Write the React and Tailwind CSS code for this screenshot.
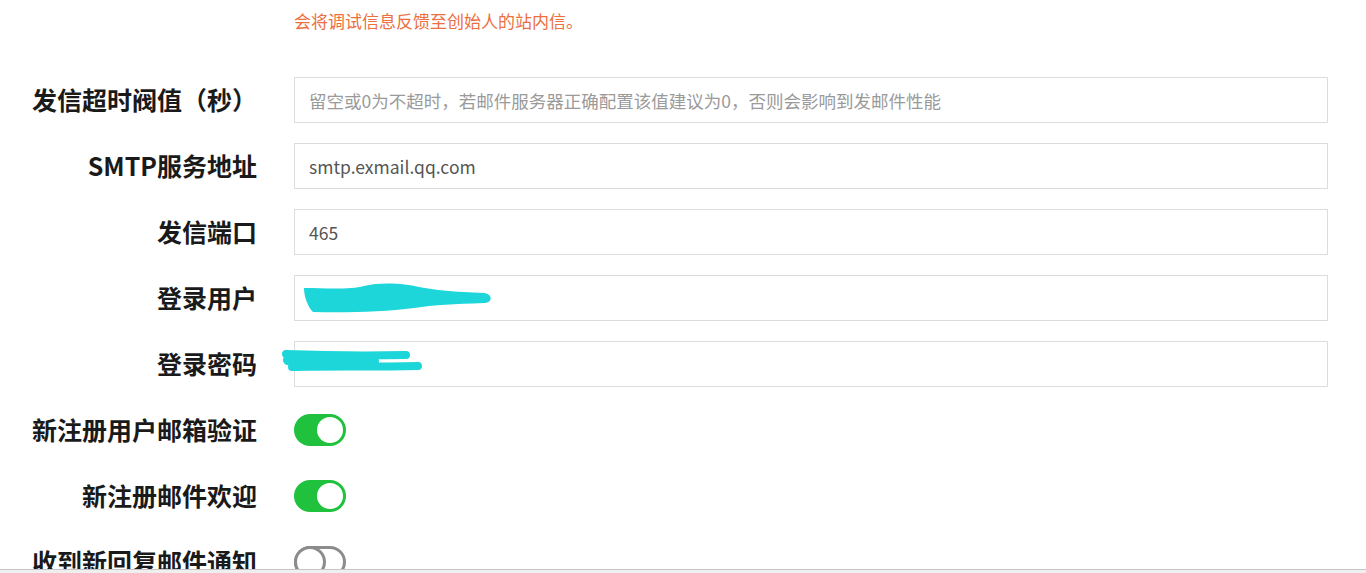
import React, { useState } from "react";

const labelCls =
  "flex items-center justify-end text-[25px] font-bold text-[#1a1a1a] whitespace-nowrap";
const inputCls =
  "h-[46px] w-full border border-[#dcdcdc] bg-white px-[14px] text-[17.5px] text-[#555] placeholder:text-[#9a9a9a] outline-none";

// censor scribble over user name
const ScribbleUser = () => (
  <svg
    className="pointer-events-none absolute left-0 top-0 overflow-visible"
    width="220"
    height="46"
    viewBox="0 0 220 46"
  >
    <path
      d="M10 13 C30 13 55 15 70 11 C85 7 110 8 125 12 C140 15 160 17 190 18 C199 19 199 28 190 28 C160 29 140 30 120 33 C90 37 50 38 19 37 C14 32 10 22 10 13 Z"
      fill="#1cd6da"
    />
  </svg>
);

// censor scribble over password
const ScribblePass = () => (
  <svg
    className="pointer-events-none absolute left-0 top-0 overflow-visible"
    width="140"
    height="46"
    viewBox="0 0 140 46"
  >
    <g stroke="#1cd6da" strokeWidth="8" strokeLinecap="round" fill="none">
      <path d="M-8 13 C20 14 60 15 112 14" />
      <path d="M-2 26 C30 25 80 26 124 25" />
      <path d="M-6 19 C20 20 50 20 80 20" strokeWidth="10" />
    </g>
  </svg>
);

const Toggle = ({ on, onClick }) =>
  on ? (
    <button
      type="button"
      onClick={onClick}
      className="relative h-[32px] w-[52px] rounded-full bg-[#1fc13d]"
    >
      <span className="absolute right-[3px] top-[3px] h-[26px] w-[26px] rounded-full bg-white" />
    </button>
  ) : (
    <button
      type="button"
      onClick={onClick}
      className="relative h-[32px] w-[52px] rounded-full border-[3px] border-[#8c8c8c] bg-white"
    >
      <span className="absolute left-[-3px] top-[-3px] h-[32px] w-[32px] rounded-full border-[3px] border-[#8c8c8c] bg-white" />
    </button>
  );

export default function App() {
  const [form, setForm] = useState({
    timeout: "",
    host: "smtp.exmail.qq.com",
    port: "465",
    user: "",
    pass: "",
  });
  const [verify, setVerify] = useState(true);
  const [welcome, setWelcome] = useState(true);
  const [notify, setNotify] = useState(false);

  const handleChange = (e) => {
    const { name, value } = e.target;
    setForm({ ...form, [name]: value });
  };

  return (
    <div
      className="flex h-[573px] flex-col overflow-hidden bg-white"
      style={{ fontFamily: '"Noto Sans CJK SC", "Noto Sans", sans-serif' }}
    >
      <div className="flex-1 overflow-hidden pr-[38px] pt-[9px]">
        <div className="grid grid-cols-[257px_1fr] gap-x-[37px] gap-y-[20px]">
          {/* hint */}
          <div />
          <p className="mb-[24px] text-[17px] leading-[24px] text-[#ec6f3f]">
            会将调试信息反馈至创始人的站内信。
          </p>

          <label className={labelCls}>发信超时阀值（秒）</label>
          <input
            name="timeout"
            value={form.timeout}
            onChange={handleChange}
            className={inputCls}
            placeholder="留空或0为不超时，若邮件服务器正确配置该值建议为0，否则会影响到发邮件性能"
          />

          <label className={labelCls}>SMTP服务地址</label>
          <input name="host" value={form.host} onChange={handleChange} className={inputCls} />

          <label className={labelCls}>发信端口</label>
          <input name="port" value={form.port} onChange={handleChange} className={inputCls} />

          <label className={labelCls}>登录用户</label>
          <div className="relative">
            <input name="user" value={form.user} onChange={handleChange} className={inputCls} />
            <ScribbleUser />
          </div>

          <label className={labelCls}>登录密码</label>
          <div className="relative">
            <input
              type="password"
              name="pass"
              value={form.pass}
              onChange={handleChange}
              className={inputCls}
            />
            <ScribblePass />
          </div>

          <label className={labelCls}>新注册用户邮箱验证</label>
          <div className="flex h-[46px] items-center">
            <Toggle on={verify} onClick={() => setVerify(!verify)} />
          </div>

          <label className={labelCls}>新注册邮件欢迎</label>
          <div className="flex h-[46px] items-center">
            <Toggle on={welcome} onClick={() => setWelcome(!welcome)} />
          </div>

          <label className={labelCls}>收到新回复邮件通知</label>
          <div className="flex h-[46px] items-center">
            <Toggle on={notify} onClick={() => setNotify(!notify)} />
          </div>
        </div>
      </div>
      <div className="h-[4px] border-t border-[#c6c6c6] bg-[#efefef]" />
    </div>
  );
}
